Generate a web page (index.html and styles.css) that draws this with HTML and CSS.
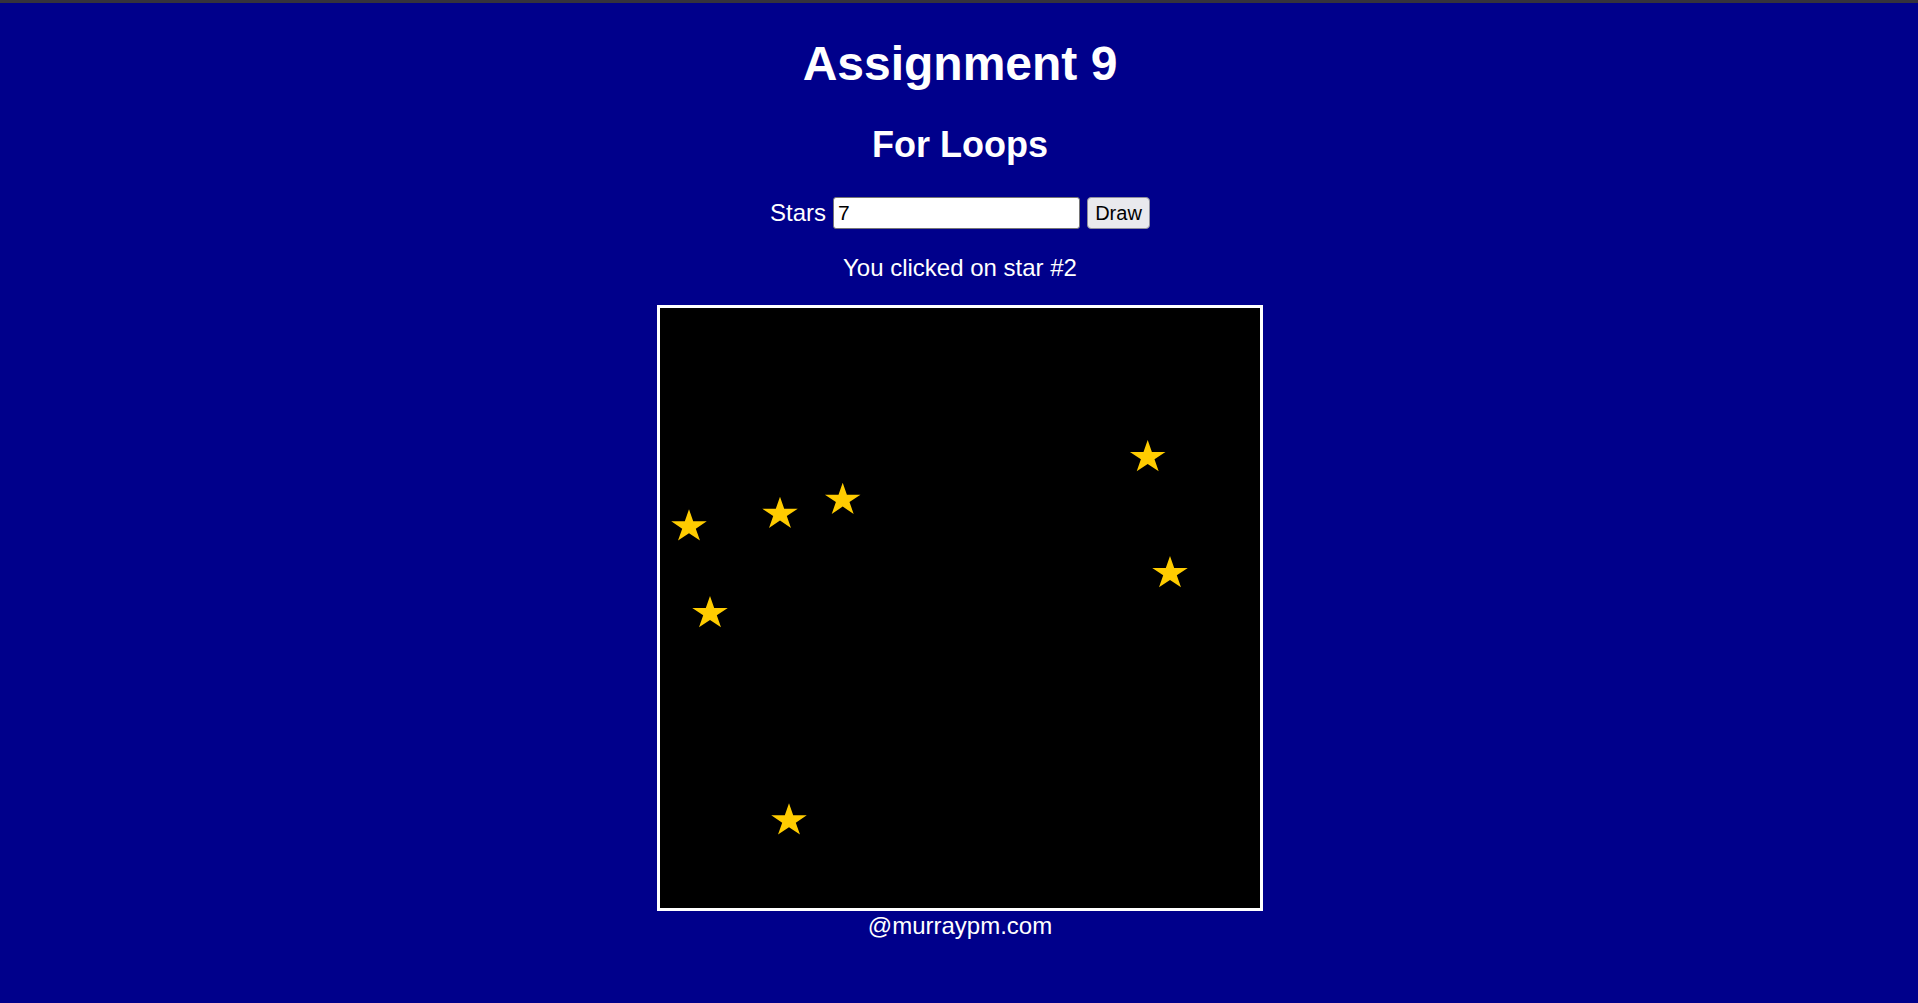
FILE: index.html
```html
<!DOCTYPE html>
<html lang="en">
<head>
<meta charset="utf-8">
<title>Assignment 9</title>
<link rel="stylesheet" href="styles.css">
</head>
<body>
<div class="topbar"></div>
<main class="page">
  <h1 class="title">Assignment 9</h1>
  <h2 class="subtitle">For Loops</h2>
  <div class="controls">
    <label class="controls-label" for="stars">Stars</label>
    <input class="controls-input" id="stars" type="text" value="7">
    <button class="controls-button" type="button">Draw</button>
  </div>
  <p class="message">You clicked on star #2</p>
  <svg class="board" width="600" height="600" viewBox="0 0 600 600" xmlns="http://www.w3.org/2000/svg">
    <defs>
      <polygon id="star" points="0,-17.3 4.2,-5.35 17.77,-5.35 6.79,2.04 10.99,14 0,6.61 -10.99,14 -6.79,2.04 -17.77,-5.35 -4.2,-5.35"/>
    </defs>
    <rect width="600" height="600" fill="#000"/>
    <g fill="#ffcc00">
      <use href="#star" x="29" y="218.6"/>
      <use href="#star" x="120" y="206"/>
      <use href="#star" x="182.7" y="192"/>
      <use href="#star" x="50" y="305.3"/>
      <use href="#star" x="487.7" y="149.3"/>
      <use href="#star" x="510" y="265.3"/>
      <use href="#star" x="129" y="512.6"/>
    </g>
  </svg>
  <div class="footer">@murraypm.com</div>
</main>
</body>
</html>
```
FILE: styles.css
```css
html, body {
  margin: 0;
  padding: 0;
}

body {
  background: #00008b;
  color: #ffffff;
  font-family: "Liberation Sans", Arial, sans-serif;
  font-size: 24px;
  min-height: 1003px;
}

.topbar {
  height: 3px;
  background: #35323d;
}

.page {
  display: flex;
  flex-direction: column;
  align-items: center;
  text-align: center;
  padding-left: 2px;
}

.title {
  font-size: 48px;
  line-height: 55px;
  font-weight: bold;
  margin: 33px 0 0;
}

.subtitle {
  font-size: 36px;
  line-height: 41px;
  font-weight: bold;
  margin: 33px 0 0;
}

.controls {
  display: flex;
  align-items: center;
  gap: 7px;
  height: 32px;
  margin-top: 32px;
}

.controls-label {
  font-size: 24px;
}

.controls-input {
  box-sizing: border-box;
  width: 247px;
  height: 32px;
  padding: 1px 4px;
  margin: 0;
  border: 1px solid #767676;
  border-radius: 3px;
  background: #ffffff;
  color: #000000;
  font-family: "Liberation Sans", Arial, sans-serif;
  font-size: 21px;
}

.controls-button {
  box-sizing: border-box;
  width: 63px;
  height: 32px;
  padding: 0;
  margin: 0;
  border: 1px solid #8f8f9d;
  border-radius: 4px;
  background: #e9e9ed;
  color: #000000;
  font-family: "Liberation Sans", Arial, sans-serif;
  font-size: 20px;
}

.message {
  margin: 25px 0 23px;
  line-height: 28px;
}

.board {
  display: block;
  border: 3px solid #ffffff;
}

.footer {
  line-height: 28px;
  padding-top: 1px;
}
```
